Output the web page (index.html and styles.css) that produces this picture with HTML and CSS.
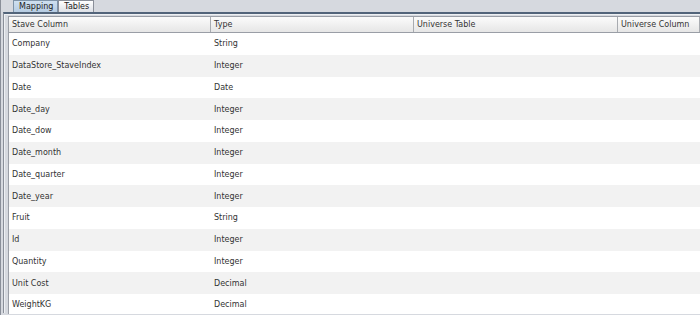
FILE: index.html
```html
<!DOCTYPE html>
<html lang="en">
<head>
    <meta charset="UTF-8">
    <title>Mapping</title>
    <link rel="stylesheet" href="styles.css">
</head>
<body>

<div class="tabs">
    <div class="tab selected">Mapping</div>
    <div class="tab">Tables</div>
</div>

<div class="panel">
    <div class="table">
        <div class="row head">
            <div class="cell">Stave Column</div>
            <div class="cell">Type</div>
            <div class="cell">Universe Table</div>
            <div class="cell">Universe Column</div>
        </div>
        <div class="row"><div class="cell">Company</div><div class="cell">String</div><div class="cell"></div><div class="cell"></div></div>
        <div class="row"><div class="cell">DataStore_StaveIndex</div><div class="cell">Integer</div><div class="cell"></div><div class="cell"></div></div>
        <div class="row"><div class="cell">Date</div><div class="cell">Date</div><div class="cell"></div><div class="cell"></div></div>
        <div class="row"><div class="cell">Date_day</div><div class="cell">Integer</div><div class="cell"></div><div class="cell"></div></div>
        <div class="row"><div class="cell">Date_dow</div><div class="cell">Integer</div><div class="cell"></div><div class="cell"></div></div>
        <div class="row"><div class="cell">Date_month</div><div class="cell">Integer</div><div class="cell"></div><div class="cell"></div></div>
        <div class="row"><div class="cell">Date_quarter</div><div class="cell">Integer</div><div class="cell"></div><div class="cell"></div></div>
        <div class="row"><div class="cell">Date_year</div><div class="cell">Integer</div><div class="cell"></div><div class="cell"></div></div>
        <div class="row"><div class="cell">Fruit</div><div class="cell">String</div><div class="cell"></div><div class="cell"></div></div>
        <div class="row"><div class="cell">Id</div><div class="cell">Integer</div><div class="cell"></div><div class="cell"></div></div>
        <div class="row"><div class="cell">Quantity</div><div class="cell">Integer</div><div class="cell"></div><div class="cell"></div></div>
        <div class="row"><div class="cell">Unit Cost</div><div class="cell">Decimal</div><div class="cell"></div><div class="cell"></div></div>
        <div class="row"><div class="cell">WeightKG</div><div class="cell">Decimal</div><div class="cell"></div><div class="cell"></div></div>
    </div>
</div>

</body>
</html>
```

FILE: styles.css
```css
body {
    margin: 0;
    height: 315px;
    overflow: hidden;
    background-color: #d6d9df;
    font-family: "DejaVu Sans", sans-serif;
    font-size: 8px;
    color: #333333;
    border-left: 1px solid #8a8f99;
}
.tabs {
    display: flex;
    height: 12px;
    padding-left: 12px;
}
.tab {
    padding: 0 4px 0 5px;
    line-height: 11px;
    border: 1px solid #8a8f99;
    border-bottom: none;
    background: linear-gradient(#ffffff, #dde0e6);
    color: #222222;
    font-size: 8px;
}
.tab.selected {
    background: linear-gradient(#cfe0f0, #b6cce2);
    border-color: #7e93a8;
}
.panel {
    margin-left: 2px;
    border-top: 2px solid #52647a;
    border-left: 1px solid #8a8f99;
    padding: 2px 0 0 4px;
    height: 301px;
    box-sizing: border-box;
    box-shadow: inset 1px 1px 0 #eef0f3;
}
.table {
    background: #ffffff;
    border-left: 1px solid #9a9ea6;
    border-top: 1px solid #9a9ea6;
    height: 100%;
}
.row {
    display: grid;
    grid-template-columns: 202px 203px 204px 1fr;
    height: 21.75px;
    align-items: center;
}
.row:nth-child(odd) {
    background: #f2f2f2;
}
.row .cell {
    padding-left: 3px;
    white-space: nowrap;
}
.row.head {
    height: 15px;
    background: linear-gradient(#fbfbfb, #e6e6e6);
    border-bottom: 1px solid #9a9ea6;
}
.row.head .cell {
    height: 100%;
    line-height: 15px;
    border-right: 1px solid #a8abb0;
}
```
